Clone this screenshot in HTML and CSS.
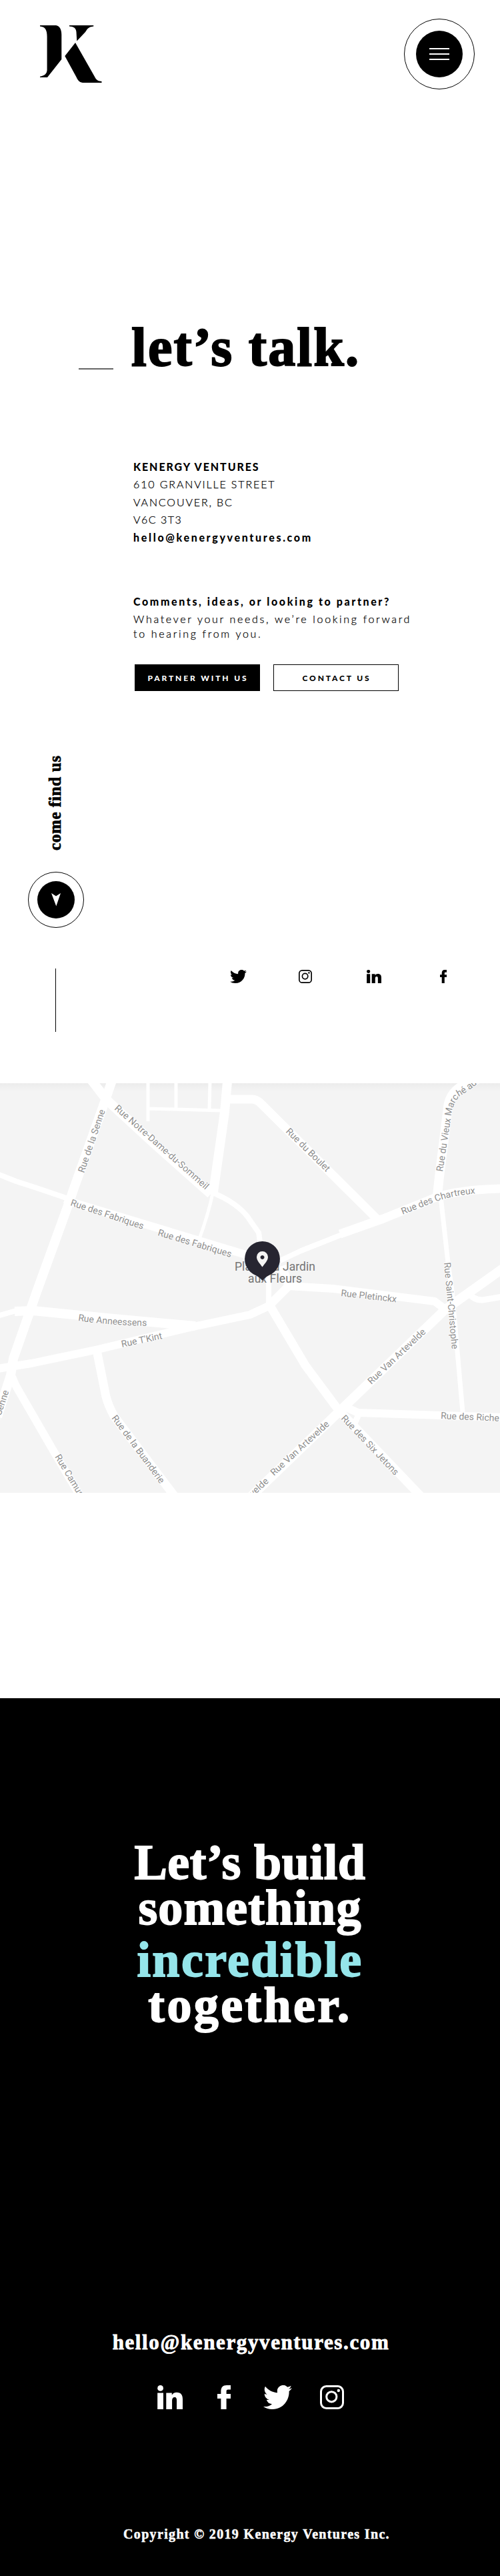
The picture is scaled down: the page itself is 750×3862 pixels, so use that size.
FILE: index.html
```html
<!DOCTYPE html>
<html lang="en">
<head>
<meta charset="utf-8">
<title>Kenergy Ventures – Contact</title>
<link rel="stylesheet" href="styles.css">
</head>
<body>
<svg class="sprite" aria-hidden="true">
  <symbol id="twitter" viewBox="0 2.25 24 19.5" preserveAspectRatio="none"><path d="M23.953 4.57a10 10 0 01-2.825.775 4.958 4.958 0 002.163-2.723c-.951.555-2.005.959-3.127 1.184a4.92 4.92 0 00-8.384 4.482C7.69 8.095 4.067 6.13 1.64 3.162a4.822 4.822 0 00-.666 2.475c0 1.71.87 3.213 2.188 4.096a4.904 4.904 0 01-2.228-.616v.06a4.923 4.923 0 003.946 4.827 4.996 4.996 0 01-2.212.085 4.936 4.936 0 004.604 3.417 9.867 9.867 0 01-6.102 2.105c-.39 0-.779-.023-1.17-.067a13.995 13.995 0 007.557 2.209c9.053 0 13.998-7.496 13.998-13.985 0-.21 0-.42-.015-.63A9.935 9.935 0 0024 4.59z"/></symbol>
  <symbol id="instagram" viewBox="0 0 36 36"><g fill="none" stroke="currentColor" stroke-width="3"><rect x="1.5" y="1.5" width="33" height="33" rx="8"/><circle cx="17.3" cy="17.3" r="7.6"/></g><circle cx="27.8" cy="8" r="2.2"/></symbol>
  <symbol id="linkedin" viewBox="0 0 38 36" preserveAspectRatio="none"><circle cx="4.6" cy="4.4" r="4.4"/><path d="M.2 11.4H9V36H.2zM13.3 11.4h8.5v3.3c1.5-2.5 4-3.9 7.2-3.9 6.5 0 9 4 9 10.3V36h-8.9V23c0-3-.6-5-3.2-5s-3.8 2-3.8 5v13h-8.8z"/></symbol>
  <symbol id="facebook" viewBox="0 0 20 36" preserveAspectRatio="none"><path d="M5.4 36V20H0v-7h5.4V9.2C5.4 3 8.4 0 14 0h6v6.6h-3.7c-2.1 0-2.7.9-2.7 2.7V13H20v7h-6.4v16z"/></symbol>
</svg>

<header class="top">
  <svg class="logo" viewBox="0 0 93 87" aria-label="K"><path d="M0 0h24c5 1 8.300 5 8.300 14v37L11 78H0v-1.200c6-1 10.600-4 10.600-10V17C10.600 7 8 2 0 1.400zM44 0h36.300v1.500C72 2.500 71 5.500 68 10L55.300 23.400 54.500 10C54.300 4 50 1.800 44 1.500zM53 26l29 51c2.500 5 5 6.800 10.500 7v2H66c-6 0-9-2.500-11.500-8.500L37.300 46z"/></svg>
  <button class="menu" aria-label="Menu"><span class="menu-disc"><i></i><i></i><i></i></span></button>
</header>

<main>
  <div class="hero"><span class="dash"></span><h1>let’s talk.</h1></div>

  <section class="details">
    <address>
      <b class="name">KENERGY VENTURES</b>
      <span>610 GRANVILLE STREET</span>
      <span>VANCOUVER, BC</span>
      <span class="postal">V6C 3T3</span>
      <b class="mail">hello@kenergyventures.com</b>
    </address>
    <p class="ask">Comments, ideas, or looking to partner?</p>
    <p class="needs">Whatever your needs, we’re looking forward<br>to hearing from you.</p>
    <div class="actions"><a class="btn solid">PARTNER WITH US</a><a class="btn">CONTACT US</a></div>
  </section>

  <section class="find">
    <div class="rail">
      <span class="find-label">come find us</span>
      <span class="ring"><span class="disc"><svg width="14" height="20" viewBox="0 0 14 20"><path d="M0 0l7 4.600L14 0 7.300 19.600z" fill="#fff"/></svg></span></span>
      <span class="rule"></span>
    </div>
    <nav class="social">
      <svg class="tw"><use href="#twitter"/></svg><svg class="ig"><use href="#instagram"/></svg><svg class="li"><use href="#linkedin"/></svg><svg class="fb"><use href="#facebook"/></svg>
    </nav>
  </section>

  <svg class="map" viewBox="0 0 750 614">
    <defs>
      <linearGradient id="shade" x2="0" y2="1"><stop stop-color="#ececec"/><stop offset="1" stop-color="#f4f4f4"/></linearGradient>
      <path id="vieux" d="M664 133L677 48Q679 30 690 19Q704 11 718-1L740-18"/>
      <path id="chartreux" d="M604 197L652 178Q682 167 720 165"/>
      <path id="anneessens" d="M117 356Q165 363 225 364"/>
    </defs>
    <rect width="750" height="614" fill="#f4f4f4"/>
    <rect width="750" height="12" fill="url(#shade)"/>
    <g class="roads">
      <path class="w14" d="M168-4L157 28 110 160 105 175 56 310 20 413 16 438-4 500"/>
      <path class="w12" d="M18 440L24 454 83 556 122 622"/>
      <path class="w14" d="M136-6L160 25 235 94 316 166"/>
      <path class="w8" d="M314 162Q360 180 376 207L388 224 391 245"/>
      <path class="w14" d="M341-2L337 43 320 163"/><path class="w5" d="M319 165Q313 195 298 236"/>
      <path class="w13" d="M341 24H378Q385 24 392 31L568 206"/>
      <path class="w5" d="M222-2V57M264-2V37M315-2L314 38M222 38L332 41"/>
      <path class="w8" d="M-4 136L24 147 52 156 105 174"/>
      <path class="w12" d="M97 174L110 179 365 256 400 266"/>
      <path class="w8" d="M420 266L452 251 520 224"/><path class="w13" d="M510 226L575 203 642 176Q675 160 754 158"/>
      <path class="w14" d="M757-30L712-4 690 6Q674 17 672 36L659 140 656 168"/>
      <path class="w7" d="M661 170L672 269 678 311 694 493"/>
      <path class="w8" d="M-4 349L24 341"/><path class="w14" d="M22 342L50 341 160 352 293 364"/>
      <path class="w12" d="M-4 428L47 420 147 399 285 366 375 347 403 334"/>
      <path class="w13" d="M145 400L159 470Q162 482 171 499L264 622"/>
      <path class="w8" d="M403 280V337"/><path class="w13" d="M423 274L433 304 403 334"/>
      <path class="w12" d="M432 304L500 308 652 327 668 339"/>
      <path class="w13" d="M404 332L458 423 507 489 632 620"/>
      <path class="w14" d="M376 620L508 493 668 339 754 278"/>
      <path class="w9" d="M702 314Q712 326 724 325L754 320"/>
      <path class="w12" d="M515 484L537 494 754 501"/><path class="w9" d="M539 494L530 515"/>
    </g>
    <g class="streets">
      <text transform="translate(126 135) rotate(-71.200)">Rue de la Senne</text>
      <text transform="translate(171 38.700) rotate(41.500)" textLength="183">Rue Notre-Dame-du-Sommeil</text>
      <text transform="translate(105 183) rotate(18.300)">Rue des Fabriques</text>
      <text transform="translate(236 228) rotate(16.700)">Rue des Fabriques</text>
      <text transform="translate(428 73) rotate(44.500)">Rue du Boulet</text>
      <text><textPath href="#vieux">Rue du Vieux Marché aux</textPath></text>
      <text><textPath href="#chartreux">Rue des Chartreux</textPath></text>
      <text transform="translate(666 269) rotate(84.800)">Rue Saint-Christophe</text>
      <text><textPath href="#anneessens">Rue Anneessens</textPath></text>
      <text transform="translate(183 396) rotate(-12)">Rue T'Kint</text>
      <text transform="translate(-18 556) rotate(-71.500)">Rue de la Senne</text>
      <text transform="translate(82 560) rotate(59)">Rue Camus</text>
      <text transform="translate(167 502) rotate(53.500)">Rue de la Buanderie</text>
      <text transform="translate(511 319) rotate(6.500)">Rue Pletinckx</text>
      <text transform="translate(557 452) rotate(-43.500)">Rue Van Artevelde</text>
      <text transform="translate(411 589) rotate(-42.500)">Rue Van Artevelde</text>
      <text transform="translate(374 625) rotate(-42.500)">evelde</text>
      <text transform="translate(511 503) rotate(46.500)">Rue des Six Jetons</text>
      <text transform="translate(661 503) rotate(2.500)">Rue des Riche</text>
    </g>
    <g class="place"><text x="352" y="281" textLength="121">Place du Jardin</text><text x="372" y="299" textLength="81">aux Fleurs</text></g>
    <path fill="#262531" d="M393.500 237a26.500 26.500 0 0 1 10 51C399 290 396 293 393.500 296c-2.500-3-5.500-6-10-8a26.500 26.500 0 0 1 10-51z"/>
    <path fill="#f4f4f4" fill-rule="evenodd" d="M393.500 252a8.500 8.500 0 0 1 8.500 8.500c0 5.500-5 10-8.500 15-3.500-5-8.500-9.500-8.500-15a8.500 8.500 0 0 1 8.500-8.500zm0 6a3 3 0 1 0 .1 0z"/>
  </svg>
</main>

<footer>
  <h2><span class="l1">Let’s build</span><span class="l2">something</span><span class="l3">incredible</span><span class="l4">together.</span></h2>
  <a class="foot-mail">hello@kenergyventures.com</a>
  <nav class="foot-social">
    <svg class="li"><use href="#linkedin"/></svg><svg class="fb"><use href="#facebook"/></svg><svg class="tw"><use href="#twitter"/></svg><svg class="ig"><use href="#instagram"/></svg>
  </nav>
  <p class="copy">Copyright © 2019 Kenergy Ventures Inc.</p>
</footer>
</body>
</html>
```
FILE: styles.css
```css
* { box-sizing: border-box; margin: 0; padding: 0; }
body { width: 750px; background: #fff; color: #000; font-family: Lato, "Open Sans", sans-serif; }
svg { display: block; fill: currentColor; }
.sprite { position: absolute; width: 0; height: 0; }

.top { display: flex; justify-content: space-between; align-items: flex-start; height: 481px; padding: 28px 38px 0 60px; }
.logo { width: 93px; height: 87px; margin-top: 10px; }
.menu { width: 106px; height: 106px; padding: 0; border: 1.5px solid #000; border-radius: 50%; background: none; display: grid; place-items: center; }
.menu-disc { width: 70px; height: 70px; border-radius: 50%; background: #000; display: flex; flex-direction: column; align-items: center; justify-content: center; gap: 6px; }
.menu-disc i { width: 30px; height: 2px; background: #fff; }

h1, h2, .find-label, .foot-mail, .copy { font-family: "Liberation Serif", serif; font-weight: bold; }
.hero { display: flex; height: 205.600px; padding-left: 118px; }
.dash { width: 52px; height: 2px; margin: 71px 27px 0 0; background: #666; }
h1 { font-size: 82px; line-height: 80px; letter-spacing: 2.100px; -webkit-text-stroke: 2px #000; white-space: nowrap; }

.details { padding-left: 200px; font-size: 16px; }
address { font-style: normal; font-weight: 300; line-height: 26.500px; letter-spacing: 1.870px; -webkit-text-stroke: .250px #000; }
address > * { display: block; }
address b { font-weight: 900; -webkit-text-stroke: 0; }
.name { letter-spacing: 1.900px; }
.postal { letter-spacing: 1.500px; }
.mail { letter-spacing: 2.650px; }
.ask { margin-top: 69.500px; font-weight: 900; line-height: 26px; letter-spacing: 2.600px; white-space: nowrap; }
.needs { margin-top: 2px; font-weight: 300; line-height: 22px; letter-spacing: 2.680px; white-space: nowrap; -webkit-text-stroke: .250px #000; }
.actions { display: flex; gap: 20px; margin: 35px 0 0 2px; }
.btn { width: 188px; height: 40px; border: 1px solid #000; font-size: 12px; font-weight: 900; line-height: 39px; letter-spacing: 2.840px; text-align: center; padding-left: 2px; }
.solid { background: #000; color: #fff; }

.find { display: flex; justify-content: space-between; height: 588px; padding: 97px 80px 0 42px; }
.rail { display: flex; flex-direction: column; align-items: center; width: 84px; }
.find-label { height: 142px; margin-right: 2px; writing-mode: vertical-rl; transform: rotate(180deg); font-size: 25px; line-height: 30px; letter-spacing: .660px; white-space: nowrap; -webkit-text-stroke: .700px #000; }
.ring { display: grid; place-items: center; width: 84px; height: 84px; margin-top: 32px; border: 1px solid #000; border-radius: 50%; }
.disc { display: grid; place-items: center; width: 56px; height: 56px; border-radius: 50%; background: #000; }
.rule { width: 1px; height: 95px; margin-top: 61px; margin-right: 1px; background: #000; }
.social { display: flex; padding-top: 321px; }
.social .tw { width: 25px; height: 20px; }
.social .ig { width: 20px; height: 20px; margin-left: 78px; }
.social .li { width: 22px; height: 20px; margin-left: 82px; }
.social .fb { width: 10px; height: 20px; margin-left: 88px; }

.map { width: 750px; height: 614px; overflow: hidden; }
.roads { fill: none; stroke: #fff; stroke-linejoin: round; }
.w5 { stroke-width: 5px; }
.w7 { stroke-width: 7px; }
.w8 { stroke-width: 8px; }
.w9 { stroke-width: 9px; }
.w12 { stroke-width: 12px; }
.w13 { stroke-width: 13px; }
.w14 { stroke-width: 14px; }
.streets { font: 14px Roboto, sans-serif; fill: #8f8f8f; stroke: #fff; stroke-width: 1.500px; paint-order: stroke; }
.place { font: 17.500px Roboto, sans-serif; fill: #757575; }

footer { display: flex; flex-direction: column; align-items: center; height: 1316px; margin-top: 308px; padding-top: 212px; background: #000; color: #fff; }
h2 { display: flex; flex-direction: column; align-items: center; font-size: 74px; line-height: 68px; -webkit-text-stroke: 1.800px currentColor; }
.l1 { letter-spacing: .600px; }
.l2 { letter-spacing: 1.150px; }
.l3 { margin-top: 10px; letter-spacing: 2.400px; color: #95e5ea; }
.l4 { letter-spacing: 3.400px; }
.foot-mail { margin-top: 452px; padding-left: 3px; font-size: 31px; line-height: 40px; letter-spacing: 1.620px; -webkit-text-stroke: .800px #fff; }
.foot-social { display: flex; margin-top: 44px; padding-left: 2px; }
.foot-social svg { height: 36px; }
.foot-social .li { width: 38px; }
.foot-social .fb { width: 20px; margin-left: 52px; }
.foot-social .tw { width: 43px; margin-left: 49px; }
.foot-social .ig { width: 36px; margin-left: 42px; }
.copy { margin-top: 172px; padding-left: 20px; font-size: 20px; line-height: 30px; letter-spacing: 1.340px; -webkit-text-stroke: .500px #fff; }
```
